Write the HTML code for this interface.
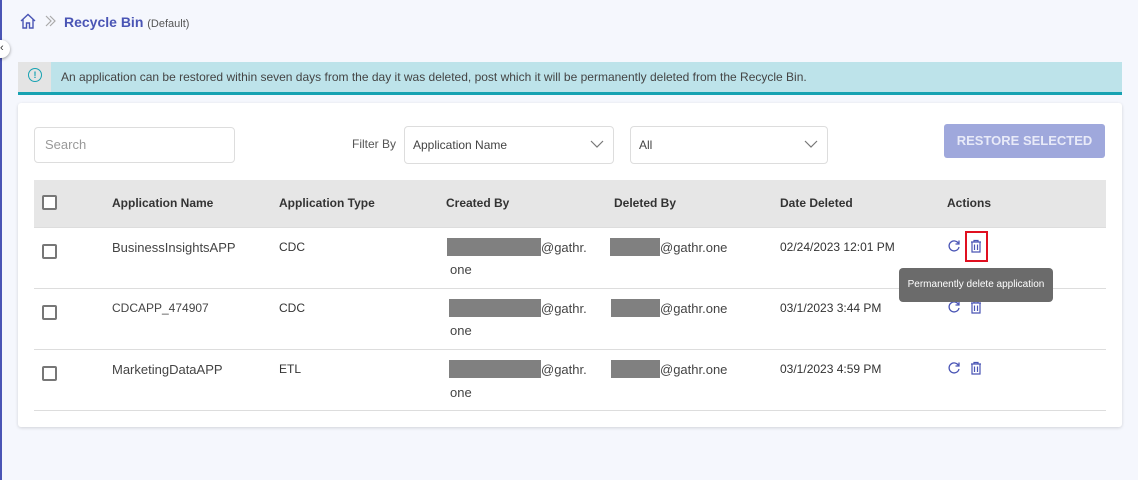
<!DOCTYPE html>
<html><head><style>
*{margin:0;padding:0;box-sizing:border-box}
body{width:1138px;height:480px;background:#f5f7fd;font-family:"Liberation Sans",Arial,sans-serif;position:relative;overflow:hidden;color:#333}
.a{position:absolute}
.lb{left:0;top:0;width:2px;height:480px;background:#4a55b5}
.t{font-size:12px;white-space:nowrap}
.h{font-size:12px;font-weight:bold;color:#333}
.cb{width:15px;height:15px;border:2px solid #777;border-radius:2px;background:#fff}
.red{background:#808080;height:18px}
.line{left:34px;width:1072px;height:1px;background:#ddd}
</style></head><body>
<div class="a lb"></div>
<svg class="a" style="left:19px;top:12px" width="18" height="18" viewBox="0 0 18 18"><path d="M2 9 L9 2.5 L16 9 M4 7.5 V16 H7.5 V11 H10.5 V16 H14 V7.5" fill="none" stroke="#4a55b5" stroke-width="1.4"/></svg>
<svg class="a" style="left:44px;top:14px" width="14" height="14"><path d="M2 2 L7 7 L2 12 M6 2 L11 7 L6 12" fill="none" stroke="#aaa" stroke-width="1.2"/></svg>
<div class="a" style="left:64px;top:14px;font-size:14px;font-weight:bold;color:#4a55b5">Recycle Bin <span style="font-weight:normal;font-size:11px;color:#555">(Default)</span></div>
<div class="a" style="left:-8px;top:40px;width:18px;height:18px;border-radius:50%;background:#fff;box-shadow:0 1px 3px rgba(0,0,0,.4)"></div>
<div class="a t" style="left:0px;top:42px;font-size:11px;color:#333">‹</div>
<div class="a" style="left:18px;top:62px;width:1104px;height:30px;background:#bde3ea"></div>
<div class="a" style="left:18px;top:62px;width:33px;height:30px;background:#e4e4e4"></div>
<div class="a" style="left:18px;top:92px;width:1104px;height:3px;background:#17a2b2"></div>
<div class="a" style="left:28px;top:68px;width:14px;height:14px;border:1.3px solid #17a2b2;border-radius:50%;font-size:9px;color:#17a2b2;text-align:center;line-height:12px;font-weight:bold">!</div>
<div class="a t" style="left:61px;top:70px;color:#444">An application can be restored within seven days from the day it was deleted, post which it will be permanently deleted from the Recycle Bin.</div>
<div class="a" style="left:18px;top:103px;width:1104px;height:324px;background:#fff;border-radius:3px;box-shadow:0 1px 3px rgba(0,0,0,.15)"></div>
<div class="a" style="left:34px;top:127px;width:201px;height:36px;border:1px solid #ddd;border-radius:4px"></div>
<div class="a t" style="left:45px;top:137px;color:#999;font-size:13px">Search</div>
<div class="a t" style="left:352px;top:137px;color:#555">Filter By</div>
<div class="a" style="left:404px;top:126px;width:210px;height:38px;border:1px solid #ddd;border-radius:4px"></div>
<div class="a t" style="left:413px;top:138px;color:#444">Application Name</div>
<svg class="a" style="left:590px;top:140px" width="14" height="9"><path d="M1 1 L7 7 L13 1" fill="none" stroke="#777" stroke-width="1.2"/></svg>
<div class="a" style="left:630px;top:126px;width:198px;height:38px;border:1px solid #ddd;border-radius:4px"></div>
<div class="a t" style="left:639px;top:138px;color:#444">All</div>
<svg class="a" style="left:804px;top:140px" width="14" height="9"><path d="M1 1 L7 7 L13 1" fill="none" stroke="#777" stroke-width="1.2"/></svg>
<div class="a" style="left:944px;top:124px;width:161px;height:34px;background:#9fa8dc;border-radius:3px;color:#e8eaf8;font-weight:bold;font-size:13px;text-align:center;line-height:34px">RESTORE SELECTED</div>
<div class="a" style="left:34px;top:180px;width:1072px;height:47px;background:#e6e6e6"></div>
<div class="a line" style="top:227px"></div>
<div class="a cb" style="left:42px;top:195px"></div>
<div class="a h" style="left:112px;top:196px">Application Name</div>
<div class="a h" style="left:279px;top:196px">Application Type</div>
<div class="a h" style="left:446px;top:196px">Created By</div>
<div class="a h" style="left:614px;top:196px">Deleted By</div>
<div class="a h" style="left:780px;top:196px">Date Deleted</div>
<div class="a h" style="left:947px;top:196px">Actions</div>

<div class="a cb" style="left:42px;top:244px"></div>
<div class="a t" style="left:112px;top:240px;font-size:13px;color:#444">BusinessInsightsAPP</div>
<div class="a t" style="left:279px;top:240px">CDC</div>
<div class="a red" style="left:447px;top:238px;width:94px"></div>
<div class="a t" style="left:541px;top:240px;font-size:13px;color:#444">@gathr.</div>
<div class="a t" style="left:450px;top:262px;font-size:13px;color:#444">one</div>
<div class="a red" style="left:610px;top:238px;width:50px"></div>
<div class="a t" style="left:660px;top:240px;font-size:13px;color:#444">@gathr.one</div>
<div class="a t" style="left:780px;top:240px">02/24/2023 12:01 PM</div>
<div class="a line" style="top:288px"></div>

<div class="a cb" style="left:42px;top:305px"></div>
<div class="a t" style="left:112px;top:301px;color:#444">CDCAPP_474907</div>
<div class="a t" style="left:279px;top:301px">CDC</div>
<div class="a red" style="left:449px;top:299px;width:92px"></div>
<div class="a t" style="left:541px;top:301px;font-size:13px;color:#444">@gathr.</div>
<div class="a t" style="left:450px;top:323px;font-size:13px;color:#444">one</div>
<div class="a red" style="left:611px;top:299px;width:49px"></div>
<div class="a t" style="left:660px;top:301px;font-size:13px;color:#444">@gathr.one</div>
<div class="a t" style="left:780px;top:301px">03/1/2023 3:44 PM</div>
<div class="a line" style="top:349px"></div>

<div class="a cb" style="left:42px;top:366px"></div>
<div class="a t" style="left:112px;top:362px;font-size:13px;color:#444">MarketingDataAPP</div>
<div class="a t" style="left:279px;top:362px">ETL</div>
<div class="a red" style="left:449px;top:360px;width:92px"></div>
<div class="a t" style="left:541px;top:362px;font-size:13px;color:#444">@gathr.</div>
<div class="a t" style="left:450px;top:385px;font-size:13px;color:#444">one</div>
<div class="a red" style="left:611px;top:360px;width:49px"></div>
<div class="a t" style="left:660px;top:362px;font-size:13px;color:#444">@gathr.one</div>
<div class="a t" style="left:780px;top:362px">03/1/2023 4:59 PM</div>
<div class="a line" style="top:410px"></div>

<svg width="0" height="0" style="position:absolute"><defs>
<g id="rf"><path d="M11.5 4.5 A5 5 0 1 0 12 8" fill="none" stroke="#4a55b5" stroke-width="1.3"/><path d="M12 1.5 V5 H8.5" fill="none" stroke="#4a55b5" stroke-width="1.3"/></g>
<g id="tr"><path d="M2 3 H12 M5 3 V1.5 H9 V3 M3 3 V13 H11 V3 M5.5 5.5 V11 M8.5 5.5 V11" fill="none" stroke="#4a55b5" stroke-width="1.2"/></g>
</defs></svg>
<svg class="a" style="left:947px;top:239px" width="14" height="14"><use href="#rf"/></svg>
<svg class="a" style="left:969px;top:239px" width="14" height="14"><use href="#tr"/></svg>
<div class="a" style="left:965px;top:231px;width:23px;height:31px;border:2px solid #e01020"></div>
<svg class="a" style="left:947px;top:300px" width="14" height="14"><use href="#rf"/></svg>
<svg class="a" style="left:969px;top:300px" width="14" height="14"><use href="#tr"/></svg>
<svg class="a" style="left:947px;top:361px" width="14" height="14"><use href="#rf"/></svg>
<svg class="a" style="left:969px;top:361px" width="14" height="14"><use href="#tr"/></svg>
<div class="a" style="left:899px;top:268px;width:154px;height:34px;background:#6b6b6b;border-radius:4px;color:#fff;font-size:10px;line-height:34px;text-align:center">Permanently delete application</div>
</body></html>
